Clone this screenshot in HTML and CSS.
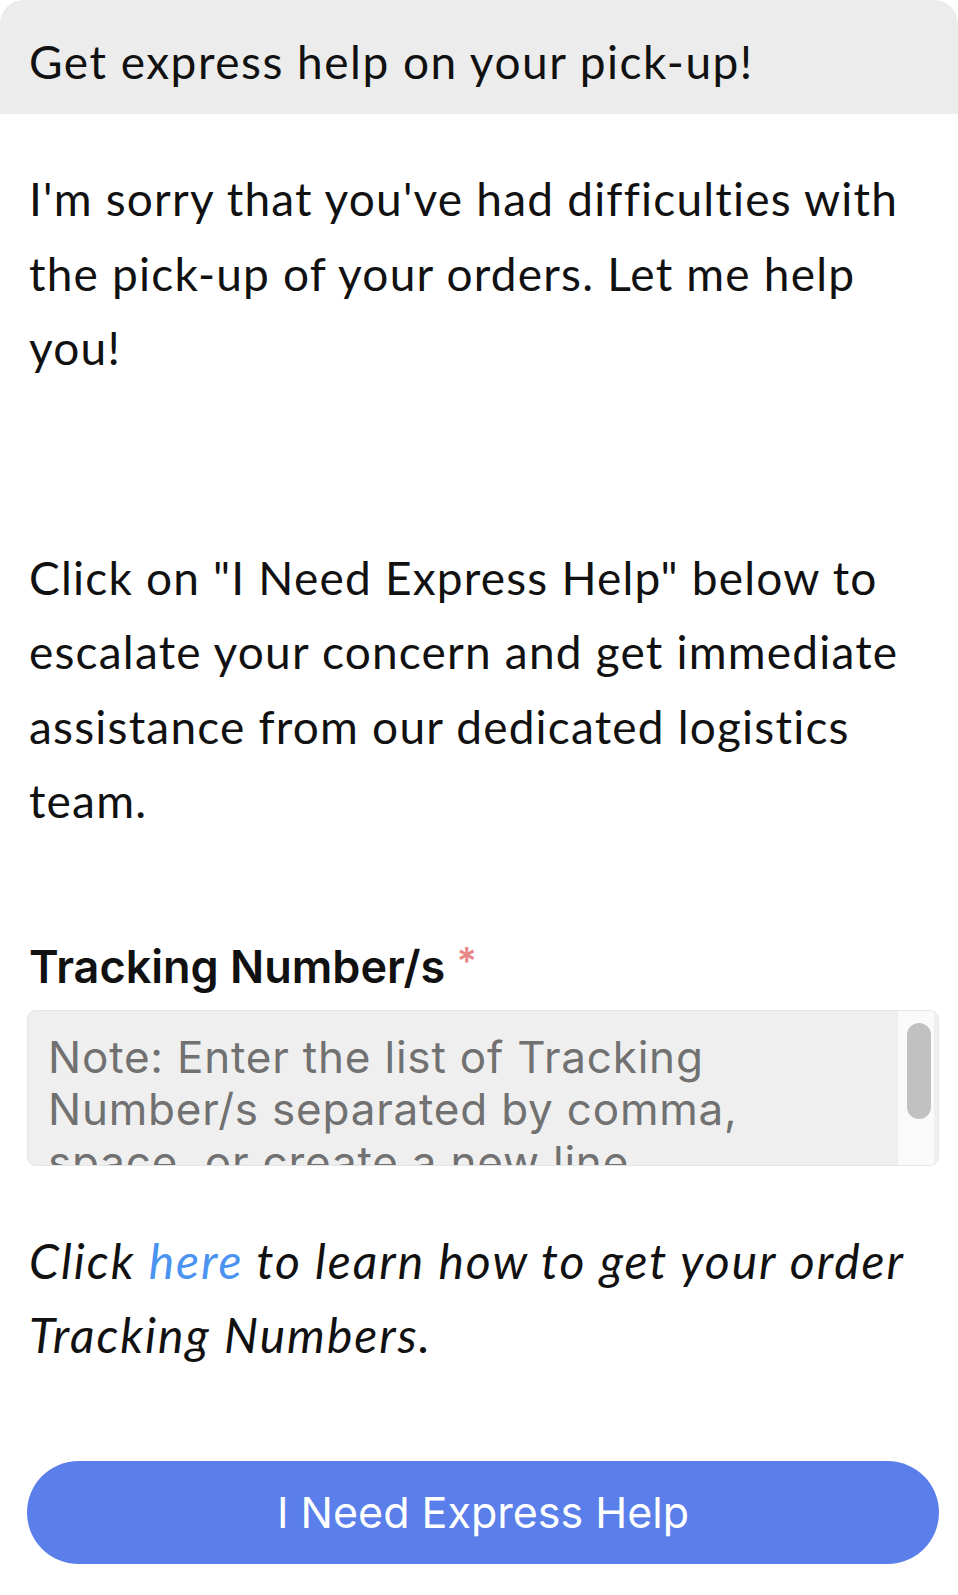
FILE: index.html
```html
<!DOCTYPE html>
<html lang="en">
<head>
<meta charset="utf-8">
<title>Express help</title>
<link rel="stylesheet" href="styles.css">
</head>
<body>
<div class="card">
  <div class="header">Get express help on your pick-up!</div>
  <div class="content">
    <p class="para first">I'm sorry that you've had difficulties with the pick-up of your orders. Let me help you!</p>
    <p class="para second">Click on "I Need Express Help" below to escalate your concern and get immediate assistance from our dedicated logistics team.</p>
    <div class="label">Tracking Number/s <span class="req">*</span></div>
    <div class="textarea">
      <div class="ta-text">Note: Enter the list of Tracking Number/s separated by comma, space, or create a new line.</div>
      <div class="ta-track"><div class="ta-thumb"></div></div>
    </div>
    <p class="para note">Click <a class="link" href="#">here</a> to learn how to get your order Tracking Numbers.</p>
    <button class="btn" type="button">I Need Express Help</button>
  </div>
</div>
</body>
</html>
```

FILE: styles.css
```css
html, body {
  margin: 0;
  padding: 0;
  background: #ffffff;
}
body {
  font-family: Lato, "Noto Sans", sans-serif;
  color: #111111;
}
.card {
  width: 958px;
}
.header {
  height: 114px;
  box-sizing: border-box;
  background: #ececec;
  border-radius: 24px 24px 0 0;
  padding: 9px 0 0 29px;
  font-size: 46px;
  line-height: 105px;
  letter-spacing: 1.5px;
  white-space: nowrap;
}
.content {
  padding: 0 19px 0 27px;
}
.para {
  margin: 0;
  padding-left: 2px;
  font-size: 46px;
  line-height: 74.5px;
  letter-spacing: 1.2px;
}
.first {
  margin-top: 48px;
}
.second {
  margin-top: 155px;
}
.label {
  margin-top: 92px;
  padding-left: 2px;
  font-family: Inter, Roboto, sans-serif;
  font-weight: 600;
  font-size: 45px;
  line-height: 60px;
  color: #111111;
}
.req {
  color: #e88585;
  font-size: 38px;
  vertical-align: 8px;
}
.textarea {
  margin-top: 13px;
  height: 156px;
  box-sizing: border-box;
  display: flex;
  background: #efefef;
  border: 1px solid #e5e5e5;
  border-radius: 9px;
  overflow: hidden;
}
.ta-text {
  flex: 1;
  padding: 20px 20px 0 20px;
  font-family: Inter, Roboto, sans-serif;
  font-size: 44px;
  line-height: 52.5px;
  letter-spacing: 0.8px;
  color: #717171;
}
.ta-track {
  width: 41px;
  flex: none;
  background: #fafafa;
  border-left: 1px solid #ececec;
  border-right: 4px solid #efefef;
  padding: 12px 0 0 9px;
  box-sizing: border-box;
}
.ta-thumb {
  width: 24px;
  height: 96px;
  border-radius: 12px;
  background: #c1c1c1;
}
.note {
  margin-top: 58px;
  font-style: italic;
  font-size: 48px;
  letter-spacing: 2px;
}
.link {
  color: #4a93f0;
  text-decoration: none;
}
.btn {
  display: block;
  margin-top: 88px;
  width: 100%;
  height: 103px;
  border: none;
  border-radius: 52px;
  background: #5a7fea;
  color: #ffffff;
  font-family: Inter, Roboto, sans-serif;
  font-size: 43px;
  font-weight: 400;
  cursor: pointer;
}
```
